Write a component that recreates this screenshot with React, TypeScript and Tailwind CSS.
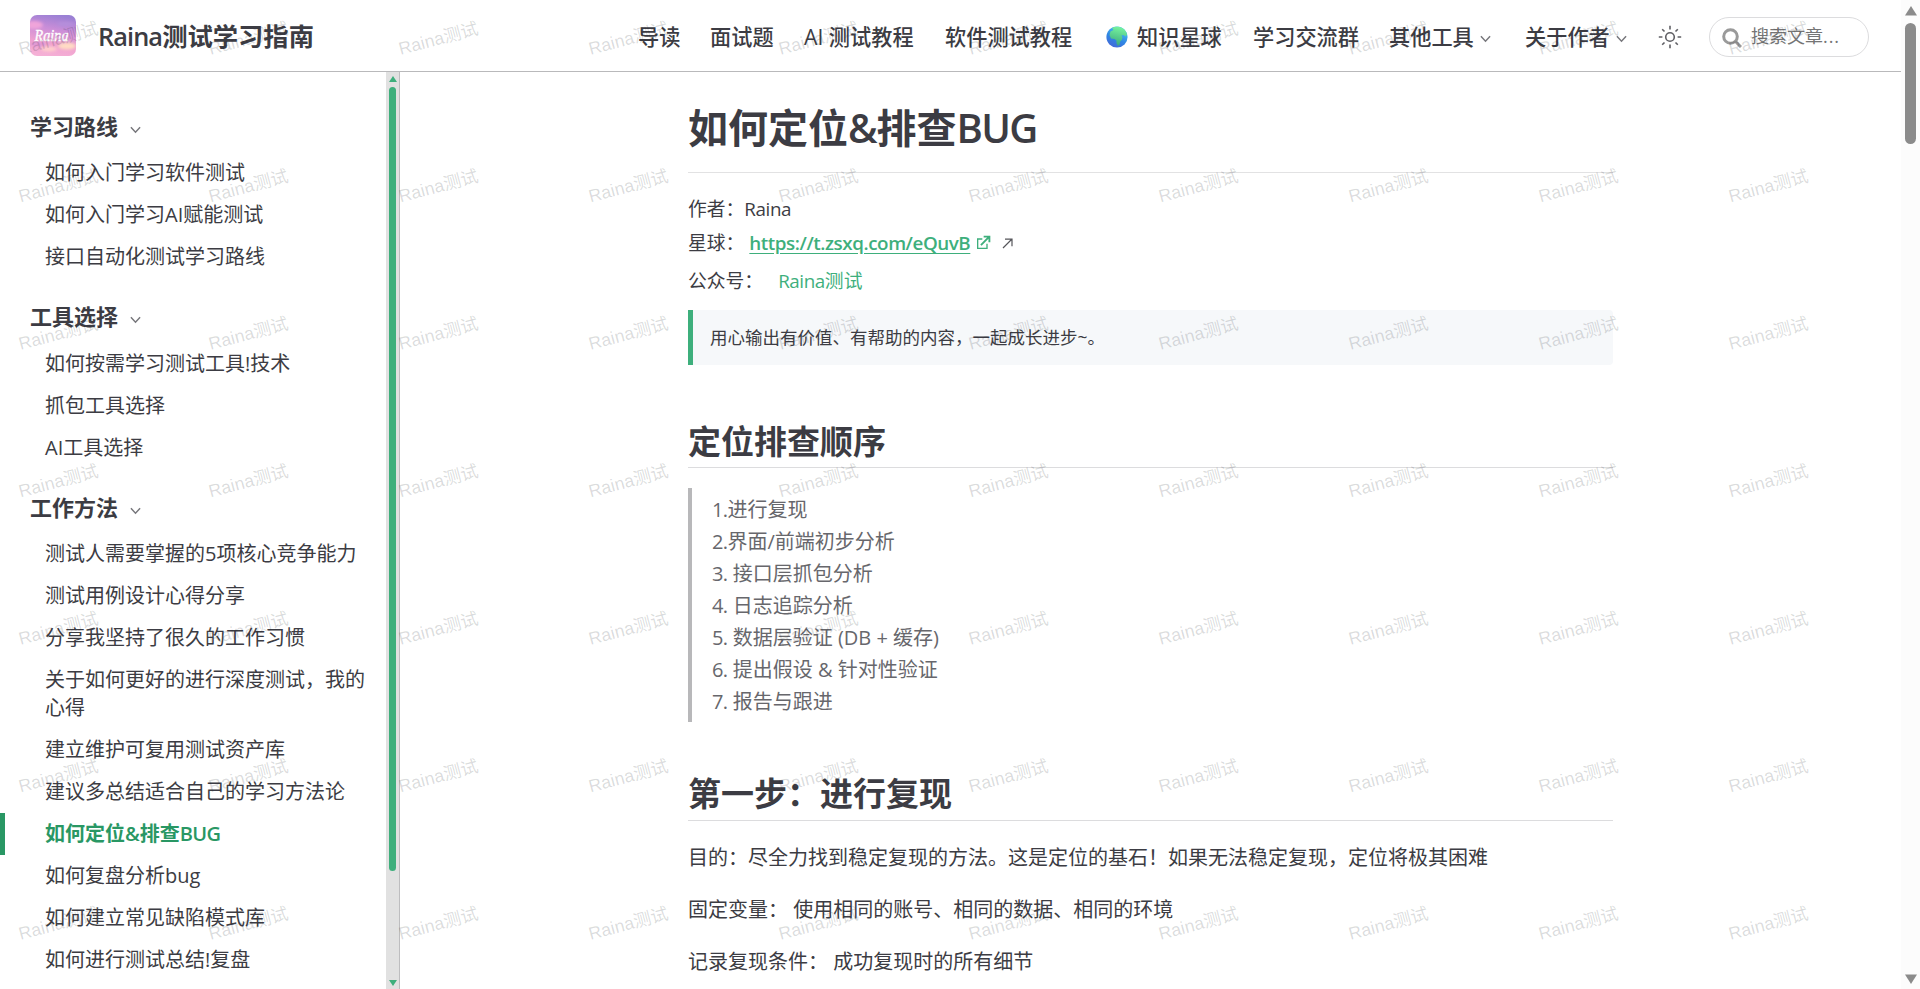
import React from "react";

const sections = [
  {
    title: "学习路线",
    items: ["如何入门学习软件测试", "如何入门学习AI赋能测试", "接口自动化测试学习路线"],
  },
  {
    title: "工具选择",
    items: ["如何按需学习测试工具!技术", "抓包工具选择", "AI工具选择"],
  },
  {
    title: "工作方法",
    items: [
      "测试人需要掌握的5项核心竞争能力",
      "测试用例设计心得分享",
      "分享我坚持了很久的工作习惯",
      "关于如何更好的进行深度测试，我的心得",
      "建立维护可复用测试资产库",
      "建议多总结适合自己的学习方法论",
      "如何定位&排查BUG",
      "如何复盘分析bug",
      "如何建立常见缺陷模式库",
      "如何进行测试总结!复盘",
    ],
  },
];

const active = "如何定位&排查BUG";

const steps = [
  "1.进行复现",
  "2.界面/前端初步分析",
  "3. 接口层抓包分析",
  "4. 日志追踪分析",
  "5. 数据层验证 (DB + 缓存)",
  "6. 提出假设 & 针对性验证",
  "7. 报告与跟进",
];

function Chevron({ className }: { className: string }) {
  return (
    <svg viewBox="0 0 12 8" className={className} fill="none" stroke="#77777c" strokeWidth="1.6">
      <path d="M1 1l5 5.4L11 1" />
    </svg>
  );
}

function Logo() {
  return (
    <svg viewBox="0 0 46 41" className="h-[41px] w-[46px] shrink-0">
      <defs>
        <linearGradient id="sky" x1="0.6" y1="0" x2="0.4" y2="1">
          <stop offset="0" stopColor="#9a80d4" />
          <stop offset="0.35" stopColor="#cb8ed8" />
          <stop offset="0.7" stopColor="#f0a2cf" />
          <stop offset="1" stopColor="#f5b0d6" />
        </linearGradient>
        <filter id="soft">
          <feGaussianBlur stdDeviation="1.6" />
        </filter>
        <clipPath id="tile">
          <rect width="46" height="41" rx="7" />
        </clipPath>
      </defs>
      <g clipPath="url(#tile)">
        <rect width="46" height="41" fill="url(#sky)" />
        <g filter="url(#soft)">
          <ellipse cx="4" cy="10" rx="9" ry="4" fill="#f0a4da" />
          <ellipse cx="36" cy="9" rx="9" ry="2" fill="#b58fdc" />
          <ellipse cx="37" cy="31" rx="9" ry="3.5" fill="#ffdcc4" />
          <ellipse cx="19" cy="34" rx="8" ry="2.6" fill="#ffd0cc" />
          <ellipse cx="8" cy="29" rx="8" ry="2" fill="#dd95d6" />
        </g>
        <text
          x="4.5"
          y="25.5"
          fill="#fff"
          fontSize="16"
          fontStyle="italic"
          fontWeight="400"
          stroke="#fff"
          strokeWidth="0.35"
          textLength="34"
          lengthAdjust="spacingAndGlyphs"
          fontFamily="'Liberation Serif', serif"
        >
          Raina
        </text>
      </g>
    </svg>
  );
}

function Globe() {
  return (
    <svg viewBox="0 0 22 22" className="h-[22px] w-[22px] shrink-0">
      <defs>
        <linearGradient id="sea" x1="0.8" y1="0" x2="0.3" y2="1">
          <stop offset="0" stopColor="#4fd0f0" />
          <stop offset="0.6" stopColor="#2f86e4" />
          <stop offset="1" stopColor="#4468d6" />
        </linearGradient>
        <linearGradient id="land" x1="0.6" y1="0" x2="0.4" y2="1">
          <stop offset="0" stopColor="#78f59e" />
          <stop offset="1" stopColor="#3aa77e" />
        </linearGradient>
      </defs>
      <circle cx="11" cy="11" r="10.6" fill="url(#sea)" />
      <path
        fill="url(#land)"
        d="M6 1.8C9 .3 14 .2 17 2.4c2 1.3 3.500 3.500 4 6l-1.500 2-1.900-1.400-2.200.400 1 1.800-.4 2.600-1.800 1.600-.6 3-1.600 1.600-1.400-2.400-.2-3-1.800-1.600-3.600-.4L3.500 9l1-3.400L7.500 4z"
      />
    </svg>
  );
}

function Sun() {
  return (
    <svg viewBox="0 0 24 24" className="h-6 w-6 shrink-0" fill="none" stroke="#5f5f64" strokeWidth="1.6">
      <circle cx="12" cy="12" r="4.3" />
      <path d="M12 .8v3.600M12 19.600v3.600M.8 12h3.600M19.600 12h3.600M4.200 4.200l2.300 2.300M17.500 17.500l2.300 2.300M4.200 19.800l2.300-2.300M17.500 6.500l2.300-2.300" />
    </svg>
  );
}

function Watermark() {
  const marks: React.ReactNode[] = [];
  for (let r = 0; r < 7; r++) {
    for (let c = 0; c < 10; c++) {
      const x = 20.5 + c * 190;
      const y = 55 + r * 147.5;
      marks.push(
        <text key={`m${r}-${c}`} x={x} y={y} transform={`rotate(-15 ${x} ${y})`} fontSize="17.7" fill="#1c1f2e" fillOpacity="0.17">
          Raina测试
        </text>
      );
    }
  }
  for (let r = 0; r < 8; r++) {
    for (let c = 0; c < 16; c++) {
      const x = (r % 2 === 0 ? 79 : 20.5) + c * 116.3;
      const y = 82 + r * 116.3;
      marks.push(
        <text key={`f${r}-${c}`} x={x} y={y} transform={`rotate(48 ${x} ${y})`} fontSize="16.5" fill="#000" fillOpacity="0.014">
          Raina测试
        </text>
      );
    }
  }
  return (
    <svg
      className="pointer-events-none absolute inset-0 z-20 h-[989px] w-[1920px] font-['Liberation_Sans','Noto_Sans_CJK_SC',sans-serif]"
      viewBox="0 0 1920 989"
    >
      {marks}
    </svg>
  );
}

function Header() {
  return (
    <header className="flex h-[72px] shrink-0 items-center border-b border-[#b9b9bb] pl-[30px]">
      <Logo />
      <span className="mt-[3px] ml-[22px] w-[540px] text-[25.3px] font-semibold whitespace-nowrap">
        <span className="tracking-[-0.9px]">Raina</span>测试学习指南
      </span>
      <nav className="mt-[3px] flex h-[36px] items-center text-[21.2px] font-medium whitespace-nowrap">
        <a className="w-[72px]">导读</a>
        <a className="w-[94px]">面试题</a>
        <a className="w-[141px]">AI 测试教程</a>
        <a className="w-[161px]">软件测试教程</a>
        <a className="flex w-[147px] items-center gap-[9px]">
          <Globe />
          知识星球
        </a>
        <a className="w-[136px]">学习交流群</a>
        <a className="flex w-[136px] items-center gap-[6px]">
          其他工具
          <Chevron className="mt-[5px] h-2 w-[11px]" />
        </a>
        <a className="flex w-[133px] items-center gap-[6px]">
          关于作者
          <Chevron className="mt-[5px] h-2 w-[11px]" />
        </a>
      </nav>
      <div className="mt-[2px] flex items-center">
        <Sun />
        <div className="ml-[27px] flex h-10 w-[160px] shrink-0 items-center rounded-full border border-[#dcdcde] pl-[12px] text-[18px] text-[#757575]">
          <svg viewBox="0 0 20 20" className="mt-[2px] mr-[9px] h-5 w-5 text-[#9a9a9a]" fill="none" stroke="currentColor" strokeWidth="3">
            <circle cx="8.5" cy="8.5" r="6.8" />
            <path d="M13 13l6 6" />
          </svg>
          <span>
            搜索文章<span className="tracking-[0.9px]">...</span>
          </span>
        </div>
      </div>
    </header>
  );
}

function Sidebar() {
  return (
    <aside className="flex w-[400px] shrink-0 border-r border-[#bdbdbf]">
      <div className="w-[386px] overflow-hidden pt-4">
        {sections.map((s) => (
          <section key={s.title}>
            <h2 className="flex h-[64.3px] items-start gap-[12px] pt-[24px] pl-[30px] text-[22px] leading-7 font-bold">
              {s.title}
              <Chevron className="mt-[14px] h-2 w-[11px]" />
            </h2>
            <ul>
              {s.items.map((t) => (
                <li
                  key={t}
                  className={
                    t === active
                      ? "border-l-[5px] border-[#299764] py-[7px] pr-4 pl-[40px] text-[20px] leading-7 font-semibold text-[#299764]"
                      : "py-[7px] pr-4 pl-[45px] text-[20px] leading-7"
                  }
                >
                  {t === active ? (
                    <>
                      如何定位&排查<span className="tracking-[-0.7px]">BUG</span>
                    </>
                  ) : (
                    t
                  )}
                </li>
              ))}
            </ul>
          </section>
        ))}
      </div>
      <div className="flex w-[13px] flex-col items-center bg-[#e1e1e1]">
        <svg viewBox="0 0 8 6" className="mt-[4px] h-[6px] w-2 shrink-0 fill-[#3eaf7c]">
          <path d="M4 0l4 6H0z" />
        </svg>
        <div className="mt-[5px] h-[784px] w-[7px] shrink-0 rounded-full bg-[#3eaf7c]" />
        <svg viewBox="0 0 8 6" className="mt-auto mb-[3px] h-[6px] w-2 shrink-0 fill-[#3eaf7c]">
          <path d="M4 6l4-6H0z" />
        </svg>
      </div>
    </aside>
  );
}

function Article() {
  return (
    <main className="flex-1 overflow-hidden pl-[288px]">
      <article className="w-[925px] text-[20px]">
        <h1 className="mt-[24px] h-[77px] border-b border-[#e2e2e3] text-[40px] leading-[64px] font-semibold">
          如何定位<span className="tracking-[-1px]">&</span>排查<span className="tracking-[-1.7px]">BUG</span>
        </h1>
        <div className="mt-[19px] text-[18.8px]">
          <p className="h-[34px] leading-[34px]">
            作者：<span className="tracking-[-0.4px]">Raina</span>
          </p>
          <p className="flex h-[34px] items-center leading-[34px]">
            星球：
            <a className="ml-[5px] font-semibold tracking-[-0.43px] text-[#3eaf7c] underline underline-offset-[3px]">https://t.zsxq.com/eQuvB</a>
            <svg viewBox="0 0 24 24" className="ml-[5px] h-[16px] w-[16px] fill-[#3eaf7c]">
              <path d="M19 21H3V5h8v2H5v12h12v-6h2zM13 1h10v10h-2.800V5.800L9.900 16.100 7.900 14.100 18.200 3.800H13z" />
            </svg>
            <svg viewBox="0 0 11 11" className="ml-[11px] h-[11px] w-[11px]" fill="none" stroke="#55555a" strokeWidth="1.2">
              <path d="M1 10L9.500 1.500M3 1.200h7v7" />
            </svg>
          </p>
          <p className="mt-[2px] flex h-[38px] items-center leading-[38px]">
            公众号：
            <a className="ml-[15px] text-[#3eaf7c]">
              <span className="tracking-[-0.4px]">Raina</span>测试
            </a>
          </p>
        </div>
        <blockquote className="mt-[10px] h-[55px] rounded-r-[4px] border-l-[5px] border-[#3eaf7c] bg-[#f6f8fa] pl-[17px] text-[17.5px] leading-[54px]">
          用心输出有价值、有帮助的内容，一起成长进步~。
        </blockquote>
        <h2 className="mt-[54px] h-[49px] border-b border-[#dcdcde] text-[33px] leading-[46px] font-bold">定位排查顺序</h2>
        <blockquote className="mt-[20px] h-[234px] border-l-4 border-[#b8b8ba] pt-[6px] pl-5 text-[#67676c]">
          {steps.map((s) => (
            <p key={s} className="leading-8">
              <span className="tracking-[-0.6px]">{s.slice(0, 2)}</span>
              {s.slice(2)}
            </p>
          ))}
        </blockquote>
        <h2 className="mt-[49px] h-[50px] border-b border-[#dcdcde] text-[33px] leading-[46px] font-bold">第一步：进行复现</h2>
        <p className="mt-[21px] leading-8">目的：尽全力找到稳定复现的方法。这是定位的基石！如果无法稳定复现，定位将极其困难</p>
        <p className="mt-5 leading-8">固定变量： 使用相同的账号、相同的数据、相同的环境</p>
        <p className="mt-5 leading-8">记录复现条件： 成功复现时的所有细节</p>
      </article>
    </main>
  );
}

export default function App() {
  return (
    <div
      lang="zh-CN"
      className="relative flex h-[989px] w-[1920px] overflow-hidden bg-white font-['Open_Sans','Noto_Sans_CJK_SC',sans-serif] text-[#3c3c43]"
    >
      <div className="flex w-[1901px] shrink-0 flex-col">
        <Header />
        <div className="flex min-h-0 flex-1">
          <Sidebar />
          <Article />
        </div>
      </div>
      <div className="flex w-[19px] flex-col items-center bg-[#fcfcfc]">
        <svg viewBox="0 0 12 10" className="mt-[6px] h-[10px] w-3 shrink-0 fill-[#8b8b8b]">
          <path d="M6 0l6 9.500H0z" />
        </svg>
        <div className="mt-[7px] h-[121px] w-[11px] shrink-0 rounded-full bg-[#8b8b8b]" />
        <svg viewBox="0 0 12 10" className="mt-auto mb-[5px] h-[10px] w-3 shrink-0 fill-[#8b8b8b]">
          <path d="M6 10l6-9.500H0z" />
        </svg>
      </div>
      <Watermark />
    </div>
  );
}
